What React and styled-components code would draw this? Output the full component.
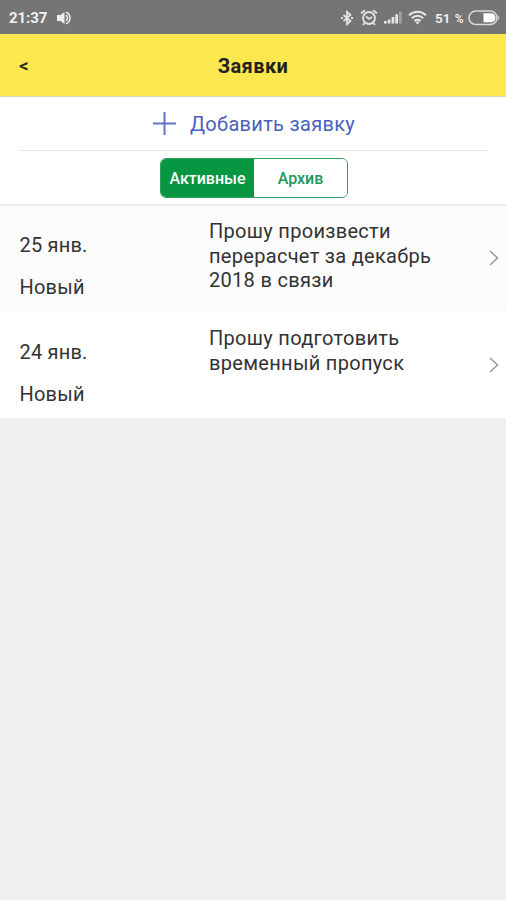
import React from 'react'
import styled, { createGlobalStyle } from 'styled-components'

const GlobalStyle = createGlobalStyle`
  * { box-sizing: border-box; }
  body {
    margin: 0;
    background: #efefef;
    font-family: Roboto, sans-serif;
    color: #333;
  }
  svg { display: block; flex: none; }
`

const Screen = styled.main`
  min-height: 900px;
  background: #efefef;
`

const StatusBar = styled.div`
  display: flex;
  align-items: center;
  height: 34px;
  padding: 1px 6px 0 9px;
  background: #757575;
  color: #f1f1f1;
`

const Clock = styled.span`
  width: 47px;
  font-size: 15px;
  font-weight: 700;
  letter-spacing: -0.1px;
`

const StatusIcons = styled.div`
  display: flex;
  align-items: center;
  gap: 6px;
  margin-left: auto;
`

const BatteryLevel = styled.span`
  width: 27px;
  margin-left: 2px;
  font-size: 13.5px;
  font-weight: 600;
  white-space: nowrap;

  small {
    font-size: 12px;
    margin-left: 1px;
  }
`

const Header = styled.header`
  display: grid;
  grid-template-columns: 60px 1fr 60px;
  align-items: center;
  height: 63px;
  padding-top: 1px;
  background: #fde74f;
  border-bottom: 1px solid #d8d4bc;
  color: #222;
`

const BackButton = styled.button`
  padding: 0 0 0 19px;
  border: 0;
  background: none;
  color: #222;
  font: 500 19px Roboto, sans-serif;
  text-align: left;
`

const Title = styled.h1`
  margin: 0;
  font-size: 20px;
  font-weight: 700;
  letter-spacing: 0.4px;
  text-align: center;
`

const Panel = styled.section`
  background: #fff;
`

const AddButton = styled.button`
  display: flex;
  align-items: center;
  justify-content: center;
  gap: 14px;
  width: 468px;
  height: 54px;
  margin: 0 auto 0 20px;
  padding: 0;
  border: 0;
  border-bottom: 1px solid #e6e6e6;
  background: none;
  color: #4a5fbd;
  font: 400 20px Roboto, sans-serif;
  letter-spacing: 0.3px;
`

const Filter = styled.div`
  display: flex;
  justify-content: center;
  height: 55px;
  padding: 7px 0 0 2px;
  border-bottom: 2px solid #ebebeb;
`

const Segment = styled.div`
  display: flex;
  width: 188px;
  height: 40px;
  border: 1px solid #2f9f5c;
  border-radius: 6px;
  overflow: hidden;
`

const Tab = styled.button`
  flex: 1;
  padding: 1px 0 0;
  border: 0;
  background: ${props => props.$active ? '#079742' : '#fff'};
  color: ${props => props.$active ? '#fff' : '#20975a'};
  font: 500 16px Roboto, sans-serif;
`

const Row = styled.article`
  display: grid;
  grid-template-columns: 189.5px 1fr 12px;
  height: 106px;
  padding: ${props => props.$shaded ? '0 6px 0 19.5px' : '1px 6px 0 19.5px'};
  background: ${props => props.$shaded ? '#fcfcfc' : '#fff'};
  border-bottom: ${props => props.$shaded ? '1px solid #f7f7f7' : '0'};
  font-size: 20px;
  letter-spacing: 0.3px;
`

const Meta = styled.div`
  padding-top: 27px;
  line-height: 24px;
  letter-spacing: 0.2px;

  p { margin: 0 0 18px; }
`

const Description = styled.p`
  margin: 0;
  padding-top: 13px;
  line-height: 24.5px;
  white-space: pre-line;
`

const Arrow = styled.div`
  padding-top: 43px;
`

const SpeakerIcon = () => (
  <svg width="16" height="16" viewBox="0 0 16 16" fill="none" stroke="#eee" strokeWidth="1.5">
    <path d="M1 5h3.500l4-3v12l-4-3H1z" fill="#eee" stroke="none" />
    <path d="M10 5.200c2 1.500 2 4.100 0 5.600M10 2.300c5.300 2 5.300 9.400 0 11.400" />
  </svg>
)

const BluetoothIcon = () => (
  <svg width="14" height="16" viewBox="0 0 14 16" fill="none" stroke="#e2e2e2" strokeWidth="1.8">
    <path d="M3.500 5l7 6-3.500 3.200V1.800L10.500 5l-7 6" />
    <path d="M1 7h2v2H1zM11 7h2v2h-2z" fill="#e2e2e2" stroke="none" />
  </svg>
)

const AlarmIcon = () => (
  <svg width="18" height="17" viewBox="0 0 18 17" fill="none" stroke="#e2e2e2" strokeWidth="1.8">
    <circle cx="9" cy="9" r="6" />
    <path d="M1 4.200l4-3M17 4.200l-4-3M6 7.500l3 2.500 3-2M4.500 14L3 16M13.500 14l1.500 2" />
  </svg>
)

const SignalIcon = () => (
  <svg width="18" height="13" viewBox="0 0 18 13" fill="#e6e6e6">
    <path d="M0 10h2.700v2.500H0zM3.800 8.500h2.700v4H3.800zM7.600 6h2.700v6.500H7.600zM11.300 3.200H14v9.300h-2.700z" />
    <path d="M15 .5h2.700v12H15z" opacity=".4" />
  </svg>
)

const WifiIcon = () => (
  <svg width="19" height="15" viewBox="0 0 19 15" fill="none" stroke="#e8e8e8" strokeWidth="2">
    <path d="M1 5.200c5-4.600 12-4.600 17 0M3.800 8.200c3.500-3 7.900-3 11.400 0M6.400 11c2-1.500 4.200-1.500 6.200 0" />
    <path d="M7.500 12.200L9.500 14.500l2-2.300c-1.200-.8-2.800-.8-4 0z" fill="#e8e8e8" stroke="none" />
  </svg>
)

const BatteryIcon = () => (
  <svg width="32" height="16" viewBox="0 0 32 16">
    <rect x="1" y="1" width="28" height="13.500" rx="6.700" fill="none" stroke="#d8d8d8" strokeWidth="1.600" />
    <path d="M15.500 3.200H23a4.500 4.500 0 0 1 0 9H15.500z" fill="#fff" />
    <path d="M30.200 5q2.200 2.800 0 5.600z" fill="#ddd" />
  </svg>
)

const PlusIcon = () => (
  <svg width="23" height="23" viewBox="0 0 23 23" stroke="#6373c5" strokeWidth="2">
    <path d="M11.500 0v23M0 11.500h23" />
  </svg>
)

const ChevronIcon = () => (
  <svg width="12" height="18" viewBox="0 0 12 18" fill="none" stroke="#999" strokeWidth="1.500">
    <path d="M2 2l7.500 7L2 16" />
  </svg>
)

const requests = [
  {
    date: '25 янв.',
    status: 'Новый',
    text: 'Прошу произвести\nперерасчет за декабрь\n2018 в связи',
    shaded: true
  },
  {
    date: '24 янв.',
    status: 'Новый',
    text: 'Прошу подготовить\nвременный пропуск'
  }
]

const App = () => {
  const rows = requests.map(r => {
    return (
      <Row key={r.date} $shaded={r.shaded}>
        <Meta>
          <p>{r.date}</p>
          <p>{r.status}</p>
        </Meta>
        <Description>{r.text}</Description>
        <Arrow><ChevronIcon /></Arrow>
      </Row>
    )
  })

  return (
    <Screen>
      <GlobalStyle />
      <StatusBar>
        <Clock>21:37</Clock>
        <SpeakerIcon />
        <StatusIcons>
          <BluetoothIcon />
          <AlarmIcon />
          <SignalIcon />
          <WifiIcon />
          <BatteryLevel>51 <small>%</small></BatteryLevel>
          <BatteryIcon />
        </StatusIcons>
      </StatusBar>
      <Header>
        <BackButton>&lt;</BackButton>
        <Title>Заявки</Title>
      </Header>
      <Panel>
        <AddButton>
          <PlusIcon />
          Добавить заявку
        </AddButton>
        <Filter>
          <Segment>
            <Tab $active>Активные</Tab>
            <Tab>Архив</Tab>
          </Segment>
        </Filter>
        {rows}
      </Panel>
    </Screen>
  )
}

export default App
